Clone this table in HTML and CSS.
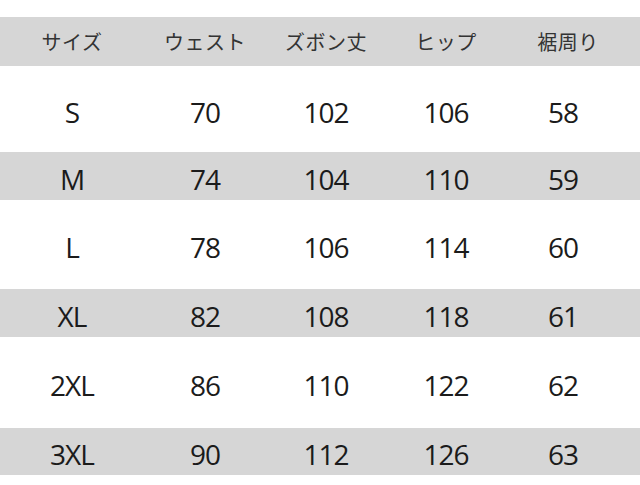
FILE: index.html
```html
<!DOCTYPE html>
<html lang="ja">
<head>
<meta charset="utf-8">
<link rel="stylesheet" href="styles.css">
</head>
<body>
<div class="chart">
  <div class="row head gray">
    <div>サイズ</div><div>ウェスト</div><div>ズボン丈</div><div>ヒップ</div><div>裾周り</div>
  </div>
  <div class="row tall h86"><div>S</div><div>70</div><div>102</div><div>106</div><div>58</div></div>
  <div class="row gray h48"><div>M</div><div>74</div><div>104</div><div>110</div><div>59</div></div>
  <div class="row tall h89"><div>L</div><div>78</div><div>106</div><div>114</div><div>60</div></div>
  <div class="row gray h48"><div>XL</div><div>82</div><div>108</div><div>118</div><div>61</div></div>
  <div class="row tall h91"><div>2XL</div><div>86</div><div>110</div><div>122</div><div>62</div></div>
  <div class="row gray h47"><div>3XL</div><div>90</div><div>112</div><div>126</div><div>63</div></div>
</div>
</body>
</html>
```
FILE: styles.css
```css
html, body {
  margin: 0;
  padding: 0;
  background: #ffffff;
}
.chart {
  padding-top: 17px;
  width: 640px;
}
.row {
  display: grid;
  grid-template-columns: 144px 122px 120px 120px 114px;
  align-items: center;
  font-family: "Open Sans", "Noto Sans", sans-serif;
  font-size: 28px;
  letter-spacing: -1px;
  color: #1b1b1b;
  line-height: 1;
}
.row > div {
  text-align: center;
  padding-top: 5px;
}
.gray {
  background: #d6d6d6;
}
.head {
  height: 49px;
  font-family: "Noto Sans CJK JP", sans-serif;
  font-size: 20px;
  letter-spacing: 0.5px;
  color: #333333;
}
.head > div {
  padding-top: 0;
}
.head > div:last-child {
  padding-left: 10px;
}
.h86 { height: 86px; }
.h48 { height: 48px; }
.h89 { height: 89px; }
.h91 { height: 91px; }
.h47 { height: 47px; }
```
